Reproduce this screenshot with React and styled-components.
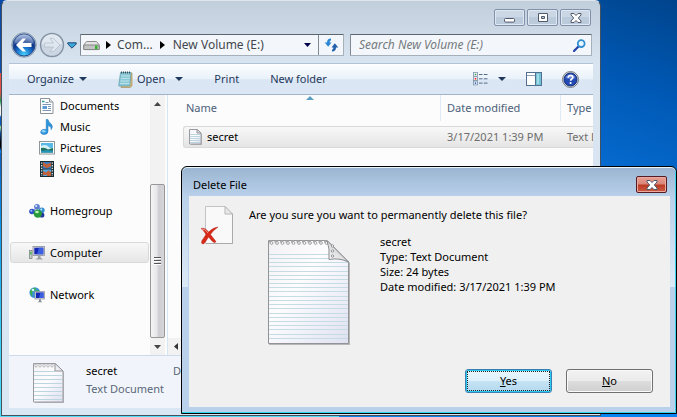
import React from "react";
import styled, { createGlobalStyle, css } from "styled-components";

const GlobalStyle = createGlobalStyle`
  *, *::before, *::after { box-sizing: border-box; }
  body { margin: 0; }
  body, button, input, table {
    font-family: "Noto Sans", "Open Sans", sans-serif;
    font-size: 11px;
    line-height: 16px;
  }
  button { cursor: default; }
`;

/* ---------- desktop and window frames ---------- */

const Desktop = styled.main`
  position: relative;
  min-height: 100vh;
  overflow: hidden;
  background:
    linear-gradient(200deg, #00448c 0, #0058b4 18%, #0873dc 45%, #0a84f0 70%) right top / 50% 100% no-repeat,
    linear-gradient(180deg, #0a4aa8 0, #0a5cc0 35%, #0a9af0 55%, #35d0f8 80%, #4fdcf8 100%);
`;

const DesktopIcon = styled.div`
  position: absolute;
  left: 0;
  top: 73px;
  width: 2px;
  height: 80px;
  background: linear-gradient(#e0524a 0 20px, #1d9a4c 28px, #f3f3f3 34px 42px, #0a5cc0 44px 52px, #a8e8a0 54px, #0a4a98 60px, #000 70px 74px, #0a84f0 78px);
`;

const ExplorerWindow = styled.section`
  position: absolute;
  inset: 0 76px 1px 1px;
  display: flex;
  flex-direction: column;
  padding: 0 7px 7px;
  border: 1px solid #44505c;
  border-top-color: #dfe6ec;
  border-radius: 6px 6px 0 0;
  background: linear-gradient(#c1cedb 0, #d8e5f1 62px, #d9e6f3 100%);
`;

const Dialog = styled.section`
  position: absolute;
  inset: 166px 0 3px 181px;
  display: flex;
  flex-direction: column;
  padding: 0 6px 6px;
  border: 1px solid #000;
  border-radius: 6px 6px 0 0;
  box-shadow: inset 0 1px #e8f6fc, inset -1px -1px #38d4ee;
  background:
    linear-gradient(#b9d1ea, #dce9f6) left 30px / 6px 90px no-repeat,
    linear-gradient(#b9d1ea, #dce9f6) right 30px / 6px 90px no-repeat,
    linear-gradient(#9ab4d1 0, #b9d1ea 30px, #b9d1ea 100%);
`;

const TitleBar = styled.header`
  display: flex;
  justify-content: flex-end;
  height: 31px;
  padding: 8px 2px 0 0;
  flex: none;
`;

const CaptionButtons = styled.div`
  display: flex;
  gap: 2px;
`;

const CaptionButton = styled.button`
  display: grid;
  place-items: center;
  width: 31px;
  height: 17px;
  padding: 0;
  border: 1px solid #8291ab;
  border-radius: 2px;
  box-shadow: inset 0 0 0 1px #dfe7f1;
  background: linear-gradient(#cbd7e4 0 50%, #bccbdb 50% 100%);
  ${(p) => p.$danger && css`
    border-color: #561c26;
    box-shadow: inset 0 0 0 1px #eaa99c;
    background: linear-gradient(#e8a093 0, #d98678 48%, #bb3a22 52%, #cb5c48 100%);
  `}
`;

/* ---------- address row ---------- */

const AddressRow = styled.nav`
  display: flex;
  align-items: center;
  height: 26px;
  padding: 0 1px 0 2px;
  flex: none;
`;

const TravelButtons = styled.div`
  position: relative;
  display: flex;
  gap: 2px;
  width: 68px;
  height: 26px;
`;

const RoundButton = styled.button`
  display: block;
  width: 26px;
  height: 26px;
  padding: 0;
  border: 0;
  background: none;
`;

const PlainButton = styled.button`
  display: flex;
  align-items: center;
  padding: 0;
  border: 0;
  background: none;
  color: ${(p) => p.$color || "#1e395b"};
`;

const AddressBox = styled.div`
  display: flex;
  align-items: center;
  flex: 0 1 264px;
  min-width: 0;
  height: 22px;
  margin-left: 1px;
  padding-left: 2px;
  border: 1px solid #a5b0bb;
  border-top-color: #5d6670;
  border-left-color: #7f8994;
  border-radius: 1px;
  background: #f3f7fb;
`;

const Crumb = styled(PlainButton)`
  color: #43474d;
  font-size: 12px;
  white-space: nowrap;
`;

const CrumbArrow = styled.span`
  display: grid;
  place-items: center;
  width: ${(p) => p.$width};
`;

const AddressEnd = styled.div`
  display: flex;
  align-items: center;
  align-self: stretch;
  margin-left: auto;
`;

const RefreshButton = styled(PlainButton)`
  align-self: stretch;
  justify-content: center;
  width: 25px;
  margin-left: 7px;
  border-left: 1px solid #7f8994;
`;

const SearchBox = styled.label`
  display: flex;
  align-items: center;
  flex: 1;
  min-width: 0;
  height: 22px;
  margin-left: 6px;
  padding: 0 5px 0 8px;
  border: 1px solid #a5b0bb;
  border-top-color: #5d6670;
  border-left-color: #7f8994;
  border-radius: 1px;
  background: #f3f7fb;
`;

const SearchInput = styled.input`
  flex: 1;
  min-width: 0;
  padding: 0;
  border: 0;
  outline: 0;
  background: none;
  font-size: 12px;
  font-style: italic;
  &::placeholder { color: #75797d; opacity: 1; }
`;

/* ---------- toolbar ---------- */

const Toolbar = styled.div`
  display: flex;
  align-items: center;
  height: 32px;
  margin-top: 5px;
  padding: 0 14px 0 18px;
  border-top: 1px solid #b3c3d6;
  border-bottom: 1px solid #a3b2c8;
  background: linear-gradient(#fdfeff 0, #e9f1fa 50%, #dbe6f4 52%, #dce7f5 100%);
  flex: none;
`;

const Commands = styled.div`
  display: flex;
  gap: 31px;
`;

const CommandButton = styled(PlainButton)`
  gap: ${(p) => (p.$wide ? "10px" : "5px")};
`;

const CommandLabel = styled.span`
  display: flex;
  align-items: center;
  gap: 4px;
`;

const ToolbarIcons = styled.div`
  display: flex;
  align-items: center;
  gap: 20px;
  margin-left: auto;
`;

/* ---------- body ---------- */

const Body = styled.div`
  display: grid;
  grid-template-columns: 141px 15px minmax(0, 1fr);
  flex: 1;
  min-height: 0;
  background: #fcfcfc;
`;

const Tree = styled.ul`
  margin: 0;
  padding: 0 1px;
  list-style: none;
`;

const TreeItem = styled.li`
  height: 21px;
  margin-top: ${(p) => (p.$group ? "21px" : "0")};
`;

const TreeLink = styled.a`
  display: flex;
  align-items: center;
  gap: 5px;
  height: 21px;
  padding-left: ${(p) => (p.$nested ? "28px" : "18px")};
  border: 1px solid ${(p) => (p.$selected ? "#d9d9d9" : "transparent")};
  border-radius: 3px;
  background: ${(p) => (p.$selected ? "linear-gradient(#f8f8f8, #e6e6e6)" : "none")};
  color: #000;
  text-decoration: none;
`;

const ScrollBar = styled.div`
  display: flex;
  flex-direction: column;
  align-items: center;
  background: #f2f2f2;
`;

const ScrollArrow = styled(PlainButton)`
  justify-content: center;
  width: 15px;
  height: 17px;
  flex: none;
`;

const ScrollTrack = styled.div`
  flex: 1;
  width: 15px;
  padding-top: 72px;
  display: flex;
`;

const ScrollThumb = styled.div`
  display: grid;
  place-items: center;
  flex: 1;
  border: 1px solid #979797;
  border-radius: 2px;
  background: linear-gradient(90deg, #f5f5f5 0, #e6e6ea 45%, #cdcdd2 60%, #d6d6da 100%);
`;

const FilePane = styled.div`
  display: flex;
  flex-direction: column;
  justify-content: space-between;
  min-width: 0;
  overflow: hidden;
  margin-left: 2px;
  border-left: 1px solid #d6e5f5;
`;

const FileTable = styled.table`
  table-layout: fixed;
  width: calc(100% - 15px);
  margin-left: 15px;
  border-collapse: separate;
  border-spacing: 0;
`;

const HeadCell = styled.th`
  position: relative;
  width: ${(p) => p.$width};
  height: 26px;
  padding: 0 0 0 ${(p) => p.$pad};
  border-right: 1px solid ${(p) => (p.$last ? "transparent" : "#dfeaf6")};
  color: #4c607a;
  font-weight: 400;
  text-align: left;
  white-space: nowrap;
  overflow: hidden;
`;

const SortMark = styled.svg`
  position: absolute;
  top: 1px;
  left: 123px;
`;

const Gap = styled.tr`
  height: 5px;
`;

const Cell = styled.td`
  height: 22px;
  padding: 0 0 0 ${(p) => (p.$first ? "5px" : "6px")};
  border: solid #d9d9d9;
  border-width: ${(p) => (p.$first ? "1px 0 1px 1px" : "1px 0")};
  border-radius: ${(p) => (p.$first ? "3px 0 0 3px" : "0")};
  background: linear-gradient(#f8f8f8, #e5e5e5);
  color: ${(p) => (p.$first ? "#000" : "#6d6d6d")};
  white-space: nowrap;
  overflow: hidden;
`;

const FileName = styled.span`
  display: flex;
  align-items: center;
  gap: 4px;
`;

const HorizontalScroll = styled.div`
  display: flex;
  height: 17px;
  background: #f2f2f2;
`;

const Details = styled.footer`
  display: flex;
  align-items: flex-start;
  height: 53px;
  padding: 7px 0 0 24px;
  border-top: 1px solid #ccdcec;
  background: #f1f5fb;
  overflow: hidden;
  flex: none;
`;

const DetailsText = styled.div`
  display: grid;
  gap: 2px;
  width: 87px;
  margin-left: 21px;
  white-space: nowrap;
  color: #5a6779;
`;

const DetailsName = styled.span`
  color: #000;
`;

const DetailsLabel = styled.span`
  color: #5a6779;
`;

/* ---------- dialog ---------- */

const DialogHeader = styled.header`
  display: flex;
  justify-content: space-between;
  align-items: flex-start;
  height: 29px;
  padding: 9px 3px 0 5px;
  flex: none;
`;

const DialogTitle = styled.h1`
  margin: 0;
  font-size: 11px;
  font-weight: 400;
  line-height: 17px;
`;

const DialogBody = styled.div`
  display: flex;
  flex-direction: column;
  justify-content: space-between;
  flex: 1;
  padding: 9px 17px 14px 11px;
  margin-left: 1px;
  background: #f0f0f0;
`;

const Message = styled.div`
  display: grid;
  grid-template-columns: 34px minmax(0, 1fr);
  column-gap: 15px;
`;

const Question = styled.p`
  margin: 2px 0 0;
`;

const FileInfo = styled.div`
  display: flex;
  gap: 29px;
  margin: 11px 0 0 18px;
`;

const Thumbnail = styled.div`
  display: flex;
  padding-top: 5px;
`;

const InfoLines = styled.div`
  line-height: 15px;
`;

const Actions = styled.div`
  display: flex;
  justify-content: flex-end;
  gap: 14px;
`;

const ActionButton = styled.button`
  position: relative;
  width: 87px;
  height: 24px;
  padding: 0;
  border: 1px solid #707070;
  border-radius: 3px;
  box-shadow: inset 0 0 0 1px #fafafa;
  background: linear-gradient(#f2f2f2 0, #ebebeb 49%, #dddddd 50%, #cfcfcf 100%);
  color: #000;
  ${(p) => p.$default && css`
    border-color: #3c7fb1;
    box-shadow: inset 0 0 0 1px #28c8f4;
    background: linear-gradient(#eaf6fd 0, #ddf0fb 49%, #c5e4f5 50%, #b5d8ed 100%);
    &::after {
      content: "";
      position: absolute;
      inset: 1px;
      border: 1px dotted #222;
    }
  `}
`;

/* ---------- drawings ---------- */

const Caret = ({ color = "#1e395b", size = 7 }) => (
  <svg width={size} height="4" viewBox="0 0 8 4" preserveAspectRatio="none"><path d="M0 0H8L4 4Z" fill={color} /></svg>
);

const RightArrow = () => (
  <svg width="5" height="8" viewBox="0 0 5 8"><path d="M0 0L5 4L0 8Z" fill="#000" /></svg>
);

const CloseGlyph = () => (
  <svg width="12" height="10" viewBox="0 0 12 10">
    <path d="M1 .5H4L6 2.5L8 .5H11V2L8.3 5L11 8V9.5H8L6 7.5L4 9.5H1V8L3.7 5L1 2Z" fill="#fff" stroke="#50586c" strokeWidth="1" />
  </svg>
);

const MinGlyph = () => (
  <svg width="12" height="10" viewBox="0 0 12 10"><rect x=".5" y="5.5" width="10" height="3.6" rx="1" fill="#fff" stroke="#50586c" /></svg>
);

const MaxGlyph = () => (
  <svg width="12" height="10" viewBox="0 0 12 10">
    <path fillRule="evenodd" d="M1.5 .5H10.5V8.5H1.5ZM4.5 3.5V5.5H7.5V3.5Z" fill="#fff" stroke="#50586c" />
  </svg>
);

const BackArt = () => (
  <svg width="26" height="26" viewBox="0 0 26 26">
    <defs>
      <radialGradient id="back" cx=".5" cy=".95" r=".95">
        <stop offset="0" stopColor="#45d5ff" /><stop offset=".4" stopColor="#1769c4" />
        <stop offset=".62" stopColor="#0b3285" /><stop offset="1" stopColor="#9fb8e2" />
      </radialGradient>
    </defs>
    <circle cx="13" cy="13" r="12.3" fill="#b9c7d6" stroke="#8090a4" strokeWidth=".8" />
    <circle cx="13" cy="13" r="11" fill="url(#back)" stroke="#264b8a" />
    <path d="M4 11A9 9 0 0 1 22 11Q13 14 4 11" fill="#fff" opacity=".25" />
    <path d="M5 13L11.5 6.5H15L11.5 11H20.5V15H11.5L15 19.5H11.5Z" fill="#fff" />
  </svg>
);

const ForwardArt = () => (
  <svg width="26" height="26" viewBox="0 0 26 26">
    <circle cx="13" cy="13" r="11.5" fill="#cbd6e2" stroke="#8491a3" strokeWidth="1.4" />
    <path d="M3 12A10 10 0 0 1 23 12Q13 15 3 12" fill="#fff" opacity=".45" />
    <path d="M21 13L14.5 6.5H11L14.5 11H5.5V15H14.5L11 19.5H14.5Z" fill="#dfe6ee" stroke="#b3bfcd" strokeWidth=".8" />
  </svg>
);

const DriveArt = () => (
  <svg width="17" height="11" viewBox="0 0 17 11">
    <path d="M3.5 1.5H13.5L16.3 5V9.5H.7V5Z" fill="#e4e4e4" stroke="#8d8d8d" strokeLinejoin="round" />
    <rect x=".7" y="5" width="15.6" height="4.6" rx="1" fill="#c2c4c3" stroke="#858787" />
    <rect x="12" y="5.5" width="2.5" height="3.5" fill="#35b52a" />
  </svg>
);

const RefreshArt = () => (
  <svg width="15" height="14" viewBox="0 0 15 14">
    <path d="M7 .5Q3 .5 3 4.5H.7L4.2 8.8L7.5 4.5H5.6Q5.6 2.5 7 2.2Z" fill="#2b86d6" />
    <path d="M8 13.5Q12 13.5 12 9.5H14.3L10.8 5.2L7.5 9.5H9.4Q9.4 11.5 8 11.8Z" fill="#2461ab" />
  </svg>
);

const SearchArt = () => (
  <svg width="13" height="13" viewBox="0 0 13 13">
    <path d="M1 12L5.7 7.3" stroke="#2444a8" strokeWidth="2.2" strokeLinecap="round" />
    <circle cx="8.2" cy="4.6" r="3.4" fill="#eaf8ff" stroke="#2f8ed2" strokeWidth="1.8" />
  </svg>
);

const NotepadArt = () => (
  <svg width="15" height="17" viewBox="0 0 15 17">
    <path d="M4 2H14V15L12 16.5H3Z" fill="#d9bb7c" stroke="#a6925f" strokeWidth=".7" />
    <path d="M2.5 1.5H13L11.8 15H.7Z" fill="#8cc9d8" stroke="#5f9cae" strokeWidth=".7" />
    <path d="M3 5H12M3 7.5H11.8M2.5 10H11.5M2 12.5H11.5" stroke="#c4e8ee" strokeWidth=".8" />
    <path d="M3 1.5H13" stroke="#3d5660" strokeWidth="2" strokeDasharray="1 1" />
  </svg>
);

const ViewArt = () => (
  <svg width="15" height="14" viewBox="0 0 15 14">
    {[0.5, 4.8, 9.1].map((y, i) => (
      <g key={y}>
        <rect x=".5" y={y} width="4" height="3.8" fill="#fff" stroke="#7c91a8" strokeWidth=".8" />
        <rect x="1.7" y={y + 1.2} width="1.6" height="1.6" fill={["#3c9a55", "#e02828", "#2e6bc0"][i]} />
        <path d={`M6 ${y + 2}H9.5M10.8 ${y + 2}H14.5`} stroke="#566d89" />
      </g>
    ))}
  </svg>
);

const PreviewArt = () => (
  <svg width="16" height="14" viewBox="0 0 16 14">
    <rect x=".5" y=".5" width="15" height="13" fill="#fff" stroke="#51708f" />
    <path d="M1 3.5H10" stroke="#8ba1b8" />
    <rect x="10" y="1" width="5" height="12" fill="#71c3d5" />
    <path d="M9.5 1V13" stroke="#51708f" />
    <path d="M12 2V12" stroke="#b5e5ee" strokeWidth="1.5" />
  </svg>
);

const HelpArt = () => (
  <svg width="17" height="17" viewBox="0 0 17 17">
    <circle cx="8.5" cy="8.5" r="8" fill="#d9dce2" stroke="#777d88" />
    <circle cx="8.5" cy="8.5" r="6.5" fill="#2349b4" stroke="#173078" />
    <path d="M3.5 7A5.2 5.2 0 0 1 13.5 7Q8.5 9 3.5 7" fill="#8aa5e8" opacity=".6" />
    <path d="M6.2 6.7Q6.3 4.5 8.6 4.5Q10.8 4.6 10.8 6.4Q10.8 7.4 9.5 8.2Q8.6 8.8 8.6 9.8" fill="none" stroke="#fff" strokeWidth="1.7" />
    <circle cx="8.6" cy="12" r="1.1" fill="#fff" />
  </svg>
);

const DocArt = () => (
  <svg width="16" height="16" viewBox="0 0 16 16">
    <path d="M1.5 .5H10.5L14 4V15.5H1.5Z" fill="#fff" stroke="#8b9298" />
    <path d="M10.5 .5V4H14" fill="#dfe5e9" stroke="#8b9298" />
    <path d="M3 3.5H5.5" stroke="#2d9b9b" strokeWidth="1.5" />
    <path d="M6.5 4.5H9.5M3.5 6.5H12M9 8.5H12M9 10.5H12M3.5 12.5H12" stroke="#7e96b5" />
    <rect x="3.5" y="8" width="4.5" height="3" fill="#5a9bd8" />
  </svg>
);

const MusicArt = () => (
  <svg width="16" height="16" viewBox="0 0 16 16">
    <path d="M7.2 .5H9Q9.5 3 12 4.8Q14.6 7.4 12.2 10.8Q12.8 7.7 9 6.6V12.3Q9 15.5 5 15.5Q1.6 15.3 1.6 13Q2 10.3 5.5 10.3L7.2 10.6Z" fill="#2f96dc" stroke="#1b74b8" strokeWidth=".5" />
    <ellipse cx="4.6" cy="12.3" rx="2" ry="1.2" fill="#8fd4f7" />
  </svg>
);

const PictureArt = () => (
  <svg width="16" height="14" viewBox="0 0 16 14">
    <rect x=".5" y=".5" width="15" height="12.5" fill="#fff" stroke="#909699" />
    <rect x="2" y="2" width="12" height="9.5" fill="#58b8e6" />
    <path d="M2 5Q7 2.5 10 6T14 6V11.5H2Z" fill="#d6f1f6" />
    <path d="M2 7Q6 6 9 8.5L14 7V11.5H2Z" fill="#23735f" />
    <path d="M2 10Q8 8.5 14 10V11.5H2Z" fill="#2596be" />
  </svg>
);

const VideoArt = () => (
  <svg width="16" height="16" viewBox="0 0 16 16">
    <rect x="1.5" y=".5" width="13" height="15" fill="#273b43" stroke="#172a31" />
    <rect x="4" y="1" width="8" height="6.5" fill="#3b7dc4" />
    <rect x="4" y="8.5" width="8" height="6.5" fill="#55a7df" />
    <path d="M4 1L7.5 3.5L12 1.5V5L9 6.8H6.5L4 5ZM4 10L7 11.5L9.5 9.5L12 11V15H8.5L7 13.4L4 14.5Z" fill="#c26138" />
    <path d="M2.7 1.5V15M13.3 1.5V15" stroke="#e4ecee" strokeWidth="1.2" strokeDasharray="1.3 1.3" />
  </svg>
);

const HomegroupArt = () => (
  <svg width="16" height="16" viewBox="0 0 16 16">
    <path d="M4 8.5L8 4L13 8L9.5 12Z" fill="none" stroke="#a7b7d2" strokeWidth="1.5" />
    <circle cx="8" cy="3.8" r="2.9" fill="#5e7fd2" />
    <circle cx="3" cy="8.5" r="2.8" fill="#2b4fc4" />
    <circle cx="12.8" cy="7.2" r="2.8" fill="#2f8ccf" />
    <circle cx="12.8" cy="12" r="2.6" fill="#24349a" />
    <circle cx="8.8" cy="10.6" r="4.2" fill="#279a3c" />
    <circle cx="7.2" cy="3" r="1.1" fill="#dce7ff" />
    <circle cx="2.4" cy="7.7" r="1" fill="#a3bbff" />
    <circle cx="12.3" cy="6.4" r="1" fill="#c5eaff" />
    <ellipse cx="8" cy="9" rx="1.8" ry="1.3" fill="#bdf2b5" />
  </svg>
);

const ComputerArt = () => (
  <svg width="16" height="16" viewBox="0 0 16 16">
    <rect x=".5" y="5.5" width="2.5" height="8" fill="#c9cfd0" stroke="#7c8686" strokeWidth=".8" />
    <rect x="1" y="7" width="1.5" height="2.5" fill="#48bd48" />
    <rect x="4" y="1.5" width="11.5" height="9" fill="#d8dbe0" stroke="#8b9097" strokeWidth=".8" />
    <rect x="5.3" y="2.7" width="9" height="6.6" fill="#1427b4" />
    <path d="M10 2.7H14.3V9.3H8Z" fill="#3a5fe0" />
    <path d="M9 10.5H11.5V12.5L14 14.5H6.5L9 12.5Z" fill="#9aa0a8" />
  </svg>
);

const NetworkArt = () => (
  <svg width="16" height="16" viewBox="0 0 16 16">
    <circle cx="5.8" cy="5.6" r="5.4" fill="#3c93dc" />
    <path d="M2 2.5Q5 0 7.5 1.5Q6 4 3 5Q4 8 2.5 9Q-.2 5.5 2 2.5ZM7 3L10 3.5L9 6H6.5Z" fill="#3bb04a" />
    <circle cx="4" cy="3" r="1.3" fill="#cdf4ff" />
    <rect x="6" y="4.5" width="9.5" height="7.5" fill="#d8dbe0" stroke="#8b9097" strokeWidth=".7" />
    <rect x="7" y="5.5" width="7.5" height="5.5" fill="#1427b4" />
    <path d="M11.5 5.5H14.5V11H10Z" fill="#3a5fe0" />
    <path d="M10 12.3H12V14L13.5 15.2H8.5L10 14Z" fill="#8b929b" />
  </svg>
);

function PadArt({ width, height, lines, holes, fold, id }) {
  const w = width - 2;
  const h = height - 2;
  return (
    <svg width={width} height={height} viewBox={`0 0 ${width} ${height}`}>
      <defs>
        <linearGradient id={id} x1="0" y1="0" x2="1" y2="1">
          <stop offset="0" stopColor="#f4f4f7" /><stop offset=".45" stopColor="#fcfcff" /><stop offset="1" stopColor="#dfe0f1" />
        </linearGradient>
      </defs>
      <path d={`M2 2H${w - fold + 1}L${w + 1} ${fold + 1}V${h + 1}H2Z`} fill="#9c9c9c" opacity=".7" />
      <path d={`M.5 .5H${w - fold}L${w} ${fold}V${h}H.5Z`} fill={`url(#${id})`} stroke="#9a9ba0" />
      {lines.map((y) => (
        <path key={y} d={`M1 ${y}H${y < fold + 1 ? w - fold : w - 1}`} stroke="#bcd5de" />
      ))}
      {holes.map((x) => (
        <ellipse key={x} cx={x} cy="2.5" rx="1.2" ry="1.6" fill="#fff" stroke="#a2a2a5" strokeWidth=".8" />
      ))}
      <path d={`M${w - fold} .5V${fold}H${w}Z`} fill="#eeeef2" stroke="#909196" />
    </svg>
  );
}

const steps = (from, to, by) => {
  const out = [];
  for (let v = from; v <= to; v += by) out.push(v);
  return out;
};

const LargePad = () => (
  <svg width="84" height="107" viewBox="0 0 84 107">
    <defs>
      <linearGradient id="largePaper" x1="0" y1="0" x2="1" y2="1">
        <stop offset="0" stopColor="#f1f1f5" /><stop offset=".4" stopColor="#fdfdff" /><stop offset="1" stopColor="#e0e1f1" />
      </linearGradient>
      <linearGradient id="foldPaper" x1="0" y1="1" x2="1" y2="0">
        <stop offset="0" stopColor="#fff" /><stop offset="1" stopColor="#b8b8bc" />
      </linearGradient>
    </defs>
    <path d="M2 3H62L83 24V106H2Z" fill="#888" opacity=".55" />
    <path d="M1.5 1.5H60L81.5 23V104.5H1.5Z" fill="url(#largePaper)" stroke="#929397" />
    {[15.5, 19.5, 23.5, 27.5, 32.5, 36.5, 40.5, 44.5, 48.5, 52.5, 57.5, 61.5, 65.5, 69.5, 74.5, 78.5, 82.5, 86.5, 90.5, 95.5, 99.5].map((y) => (
      <path key={y} d={`M2 ${y}H${y < 22 ? 62 : 81}`} stroke="#c5dce4" />
    ))}
    <path d="M2 2.5H60" stroke="#a5a5a8" strokeWidth="2" strokeDasharray="3 2.5" />
    {steps(4.5, 60, 5.5).map((x) => (
      <circle key={x} cx={x} cy="4" r="1.4" fill="#fafafa" stroke="#99999c" strokeWidth=".9" />
    ))}
    <path d="M60 1.5Q63 9 62 20.5Q72 18.5 81.5 23Z" fill="url(#foldPaper)" stroke="#8a8b8f" />
    {[7, 12, 17].map((y) => <circle key={y} cx="65.5" cy={y} r="1.2" fill="#fff" stroke="#88898c" strokeWidth=".9" />)}
  </svg>
);

const DeleteArt = () => (
  <svg width="34" height="40" viewBox="0 0 34 40">
    <path d="M5.5 1.5H25L32.5 9V38.5H5.5Z" fill="#f9f9f9" stroke="#c4c4c4" />
    <path d="M32.5 9V38.5H6" fill="none" stroke="#aaa" />
    <path d="M25 1.5V9H32.5Z" fill="#e9e9e9" stroke="#b5b5b5" />
    <path d="M1 23.5Q5 22 8.5 27Q13 22.5 18 22Q13 25.5 10.5 29.5L16 36.5Q15 39 12 36L8.5 32Q5 38 3.5 39Q.5 39 2 35.5L6 29.5Q4 25.5 1 23.5Z" fill="#d82818" stroke="#a92014" strokeWidth=".4" />
    <path d="M2 24Q5 23.5 8 28" fill="none" stroke="#f3928a" />
  </svg>
);

const SmallFile = () => <PadArt id="smallPad" width={14} height={17} fold={4} lines={[5.5, 7.5, 9.5, 11.5, 13.5]} holes={[]} />;

const TREE = [
  { label: "Documents", art: DocArt, nested: true },
  { label: "Music", art: MusicArt, nested: true },
  { label: "Pictures", art: PictureArt, nested: true },
  { label: "Videos", art: VideoArt, nested: true },
  { label: "Homegroup", art: HomegroupArt },
  { label: "Computer", art: ComputerArt, selected: true },
  { label: "Network", art: NetworkArt },
];

/* ---------- page ---------- */

export default function App() {
  return (
    <Desktop>
      <GlobalStyle />
      <DesktopIcon />
      <ExplorerWindow aria-label="New Volume (E:)">
        <TitleBar>
          <CaptionButtons>
            <CaptionButton aria-label="Minimize"><MinGlyph /></CaptionButton>
            <CaptionButton aria-label="Maximize"><MaxGlyph /></CaptionButton>
            <CaptionButton aria-label="Close"><CloseGlyph /></CaptionButton>
          </CaptionButtons>
        </TitleBar>

        <AddressRow aria-label="Address">
          <TravelButtons>
            <RoundButton aria-label="Back"><BackArt /></RoundButton>
            <RoundButton aria-label="Forward"><ForwardArt /></RoundButton>
            <PlainButton aria-label="Recent pages">
              <svg width="10" height="7" viewBox="0 0 10 7"><path d="M.8 .8H9.2V2L5 6.2L.8 2Z" fill="#3ca7d8" stroke="#1d4775" /></svg>
            </PlainButton>
          </TravelButtons>
          <AddressBox>
            <DriveArt />
            <CrumbArrow $width="17px"><RightArrow /></CrumbArrow>
            <Crumb>Com...</Crumb>
            <CrumbArrow $width="20px"><RightArrow /></CrumbArrow>
            <Crumb>New Volume (E:)</Crumb>
            <AddressEnd>
              <PlainButton aria-label="Previous locations"><Caret color="#00004f" /></PlainButton>
              <RefreshButton aria-label="Refresh"><RefreshArt /></RefreshButton>
            </AddressEnd>
          </AddressBox>
          <SearchBox>
            <SearchInput aria-label="Search New Volume (E:)" placeholder="Search New Volume (E:)" />
            <SearchArt />
          </SearchBox>
        </AddressRow>

        <Toolbar>
          <Commands>
            <CommandButton>Organize <Caret size={8} /></CommandButton>
            <CommandButton $wide><CommandLabel><NotepadArt />Open</CommandLabel><Caret size={8} /></CommandButton>
            <CommandButton>Print</CommandButton>
            <CommandButton>New folder</CommandButton>
          </Commands>
          <ToolbarIcons>
            <CommandButton $wide aria-label="Change your view"><ViewArt /><Caret size={8} /></CommandButton>
            <PlainButton aria-label="Preview pane"><PreviewArt /></PlainButton>
            <PlainButton aria-label="Help"><HelpArt /></PlainButton>
          </ToolbarIcons>
        </Toolbar>

        <Body>
          <Tree>
            {TREE.map(({ label, art: Art, nested, selected }) => (
              <TreeItem key={label} $group={!nested}>
                <TreeLink href="#" $nested={nested} $selected={selected}><Art />{label}</TreeLink>
              </TreeItem>
            ))}
          </Tree>
          <ScrollBar>
            <ScrollArrow aria-label="Scroll up"><svg width="7" height="4"><path d="M0 4L3.5 0L7 4Z" fill="#444" /></svg></ScrollArrow>
            <ScrollTrack>
              <ScrollThumb><svg width="7" height="9"><path d="M0 .5H7M0 3.5H7M0 6.5H7" stroke="#555" /><path d="M0 1.5H7M0 4.5H7M0 7.5H7" stroke="#fff" /></svg></ScrollThumb>
            </ScrollTrack>
            <ScrollArrow aria-label="Scroll down"><Caret color="#444" /></ScrollArrow>
          </ScrollBar>
          <FilePane>
            <FileTable>
              <thead>
                <tr>
                  <HeadCell $width="258px" $pad="3px">Name
                    <SortMark width="8" height="4" viewBox="0 0 8 4"><path d="M0 4L4 0L8 4Z" fill="#5d9fc2" /></SortMark>
                  </HeadCell>
                  <HeadCell $width="120px" $pad="6px">Date modified</HeadCell>
                  <HeadCell $pad="6px" $last>Type</HeadCell>
                </tr>
              </thead>
              <tbody>
                <Gap />
                <tr>
                  <Cell $first><FileName><SmallFile />secret</FileName></Cell>
                  <Cell>3/17/2021 1:39 PM</Cell>
                  <Cell>Text Document</Cell>
                </tr>
              </tbody>
            </FileTable>
            <HorizontalScroll>
              <ScrollArrow aria-label="Scroll left"><svg width="4" height="7"><path d="M4 0V7L0 3.5Z" fill="#333" /></svg></ScrollArrow>
            </HorizontalScroll>
          </FilePane>
        </Body>

        <Details>
          <PadArt id="detailPad" width={32} height={41} fold={8} lines={steps(8.5, 38, 4)} holes={steps(3, 22, 4)} />
          <DetailsText>
            <DetailsName>secret</DetailsName>
            <span>Text Document</span>
          </DetailsText>
          <DetailsLabel>Date modified:</DetailsLabel>
        </Details>
      </ExplorerWindow>

      <Dialog role="dialog" aria-labelledby="dialog-title">
        <DialogHeader>
          <DialogTitle id="dialog-title">Delete File</DialogTitle>
          <CaptionButton $danger aria-label="Close dialog"><CloseGlyph /></CaptionButton>
        </DialogHeader>
        <DialogBody>
          <Message>
            <DeleteArt />
            <div>
              <Question>Are you sure you want to permanently delete this file?</Question>
              <FileInfo>
                <Thumbnail><LargePad /></Thumbnail>
                <InfoLines>
                  <div>secret</div>
                  <div>Type: Text Document</div>
                  <div>Size: 24 bytes</div>
                  <div>Date modified: 3/17/2021 1:39 PM</div>
                </InfoLines>
              </FileInfo>
            </div>
          </Message>
          <Actions>
            <ActionButton $default><u>Y</u>es</ActionButton>
            <ActionButton><u>N</u>o</ActionButton>
          </Actions>
        </DialogBody>
      </Dialog>
    </Desktop>
  );
}
